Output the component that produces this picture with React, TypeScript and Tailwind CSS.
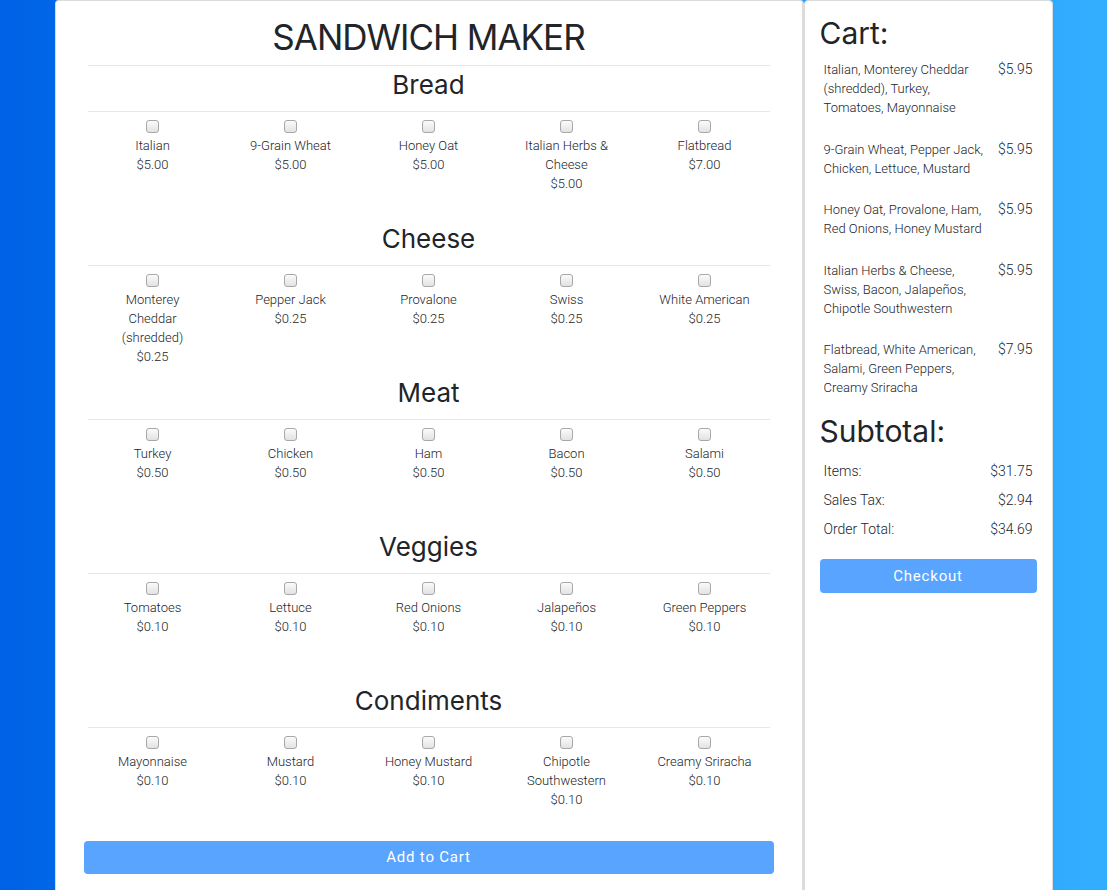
import React from "react";

type Item = { name: string; price: string };

const sections: { title: string; items: Item[] }[] = [
  {
    title: "Bread",
    items: [
      { name: "Italian", price: "$5.00" },
      { name: "9-Grain Wheat", price: "$5.00" },
      { name: "Honey Oat", price: "$5.00" },
      { name: "Italian Herbs & Cheese", price: "$5.00" },
      { name: "Flatbread", price: "$7.00" },
    ],
  },
  {
    title: "Cheese",
    items: [
      { name: "Monterey Cheddar (shredded)", price: "$0.25" },
      { name: "Pepper Jack", price: "$0.25" },
      { name: "Provalone", price: "$0.25" },
      { name: "Swiss", price: "$0.25" },
      { name: "White American", price: "$0.25" },
    ],
  },
  {
    title: "Meat",
    items: [
      { name: "Turkey", price: "$0.50" },
      { name: "Chicken", price: "$0.50" },
      { name: "Ham", price: "$0.50" },
      { name: "Bacon", price: "$0.50" },
      { name: "Salami", price: "$0.50" },
    ],
  },
  {
    title: "Veggies",
    items: [
      { name: "Tomatoes", price: "$0.10" },
      { name: "Lettuce", price: "$0.10" },
      { name: "Red Onions", price: "$0.10" },
      { name: "Jalapeños", price: "$0.10" },
      { name: "Green Peppers", price: "$0.10" },
    ],
  },
  {
    title: "Condiments",
    items: [
      { name: "Mayonnaise", price: "$0.10" },
      { name: "Mustard", price: "$0.10" },
      { name: "Honey Mustard", price: "$0.10" },
      { name: "Chipotle Southwestern", price: "$0.10" },
      { name: "Creamy Sriracha", price: "$0.10" },
    ],
  },
];

const cart = [
  { desc: "Italian, Monterey Cheddar (shredded), Turkey, Tomatoes, Mayonnaise", price: "$5.95" },
  { desc: "9-Grain Wheat, Pepper Jack, Chicken, Lettuce, Mustard", price: "$5.95" },
  { desc: "Honey Oat, Provalone, Ham, Red Onions, Honey Mustard", price: "$5.95" },
  { desc: "Italian Herbs & Cheese, Swiss, Bacon, Jalapeños, Chipotle Southwestern", price: "$5.95" },
  { desc: "Flatbread, White American, Salami, Green Peppers, Creamy Sriracha", price: "$7.95" },
];

function Box() {
  return (
    <span className="block w-[13px] h-[13px] rounded-[3px] border border-[#a8a8a8] bg-linear-to-b from-[#fbfbfb] to-[#e2e2e2]" />
  );
}

export default function App() {
  return (
    <div className="min-h-screen w-full bg-linear-to-r from-[#0062e6] to-[#33aeff] font-['Roboto',sans-serif] font-light text-[#212529]">
      <div className="mx-auto flex w-[998px] items-stretch">
        {/* Left panel */}
        <div className="w-[749px] shrink-0 rounded-t-[4px] border border-[#dcdcdc] border-r-2 bg-white px-[28px] pb-[40px]">
          <h1 className="pt-[14px] text-center font-['Inter',sans-serif] text-[35px] font-normal leading-[44px] tracking-[-1px] text-[#212529]">
            SANDWICH MAKER
          </h1>
          <div className="mx-[4px] mt-[6px] h-px bg-[#e6e6e6]" />
          <div className="pt-[4px]">
            {sections.map((s) => (
              <section key={s.title}>
                <h2 className="text-center font-['Inter',sans-serif] text-[26px] font-normal leading-[30px] text-[#212529]">
                  {s.title}
                </h2>
                <div className="mx-[4px] mt-[11px] h-px bg-[#e6e6e6]" />
                <div className="grid h-[112px] grid-cols-5">
                  {s.items.map((it) => (
                    <div key={it.name} className="flex flex-col items-center pt-[8px] text-center text-[13px] leading-[19px]">
                      <Box />
                      <div className="mt-[3px] w-[98px]">{it.name}</div>
                      <div>{it.price}</div>
                    </div>
                  ))}
                </div>
              </section>
            ))}
          </div>
          <button className="mt-[1px] h-[33px] w-full rounded-[4px] bg-[#58a4ff] text-[15px] font-normal tracking-[0.8px] text-white">
            Add to Cart
          </button>
        </div>

        {/* Right panel */}
        <div className="w-[249px] shrink-0 rounded-t-[4px] border border-[#dcdcdc] bg-white px-[15px] pt-[14px]">
          <h2 className="font-['Inter',sans-serif] text-[30px] font-normal leading-[36px] text-[#212529]">Cart:</h2>
          <div className="mt-[9px] px-[4px]">
            {cart.map((c, i) => (
              <div key={i} className={`flex items-start justify-between ${i < cart.length - 1 ? "mb-[22.5px]" : ""}`}>
                <div className="w-[165px] text-[13px] leading-[19px]">{c.desc}</div>
                <div className="text-[14px] leading-[19px]">{c.price}</div>
              </div>
            ))}
          </div>
          <h2 className="mt-[16px] font-['Inter',sans-serif] text-[30px] font-normal leading-[36px] text-[#212529]">Subtotal:</h2>
          <div className="mt-[8px] px-[4px] text-[14px] leading-[29px]">
            <div className="flex justify-between"><span>Items:</span><span>$31.75</span></div>
            <div className="flex justify-between"><span>Sales Tax:</span><span>$2.94</span></div>
            <div className="flex justify-between"><span>Order Total:</span><span>$34.69</span></div>
          </div>
          <button className="mt-[15px] h-[34px] w-full rounded-[4px] bg-[#58a4ff] text-[15px] font-normal tracking-[0.8px] text-white">
            Checkout
          </button>
        </div>
      </div>
    </div>
  );
}
